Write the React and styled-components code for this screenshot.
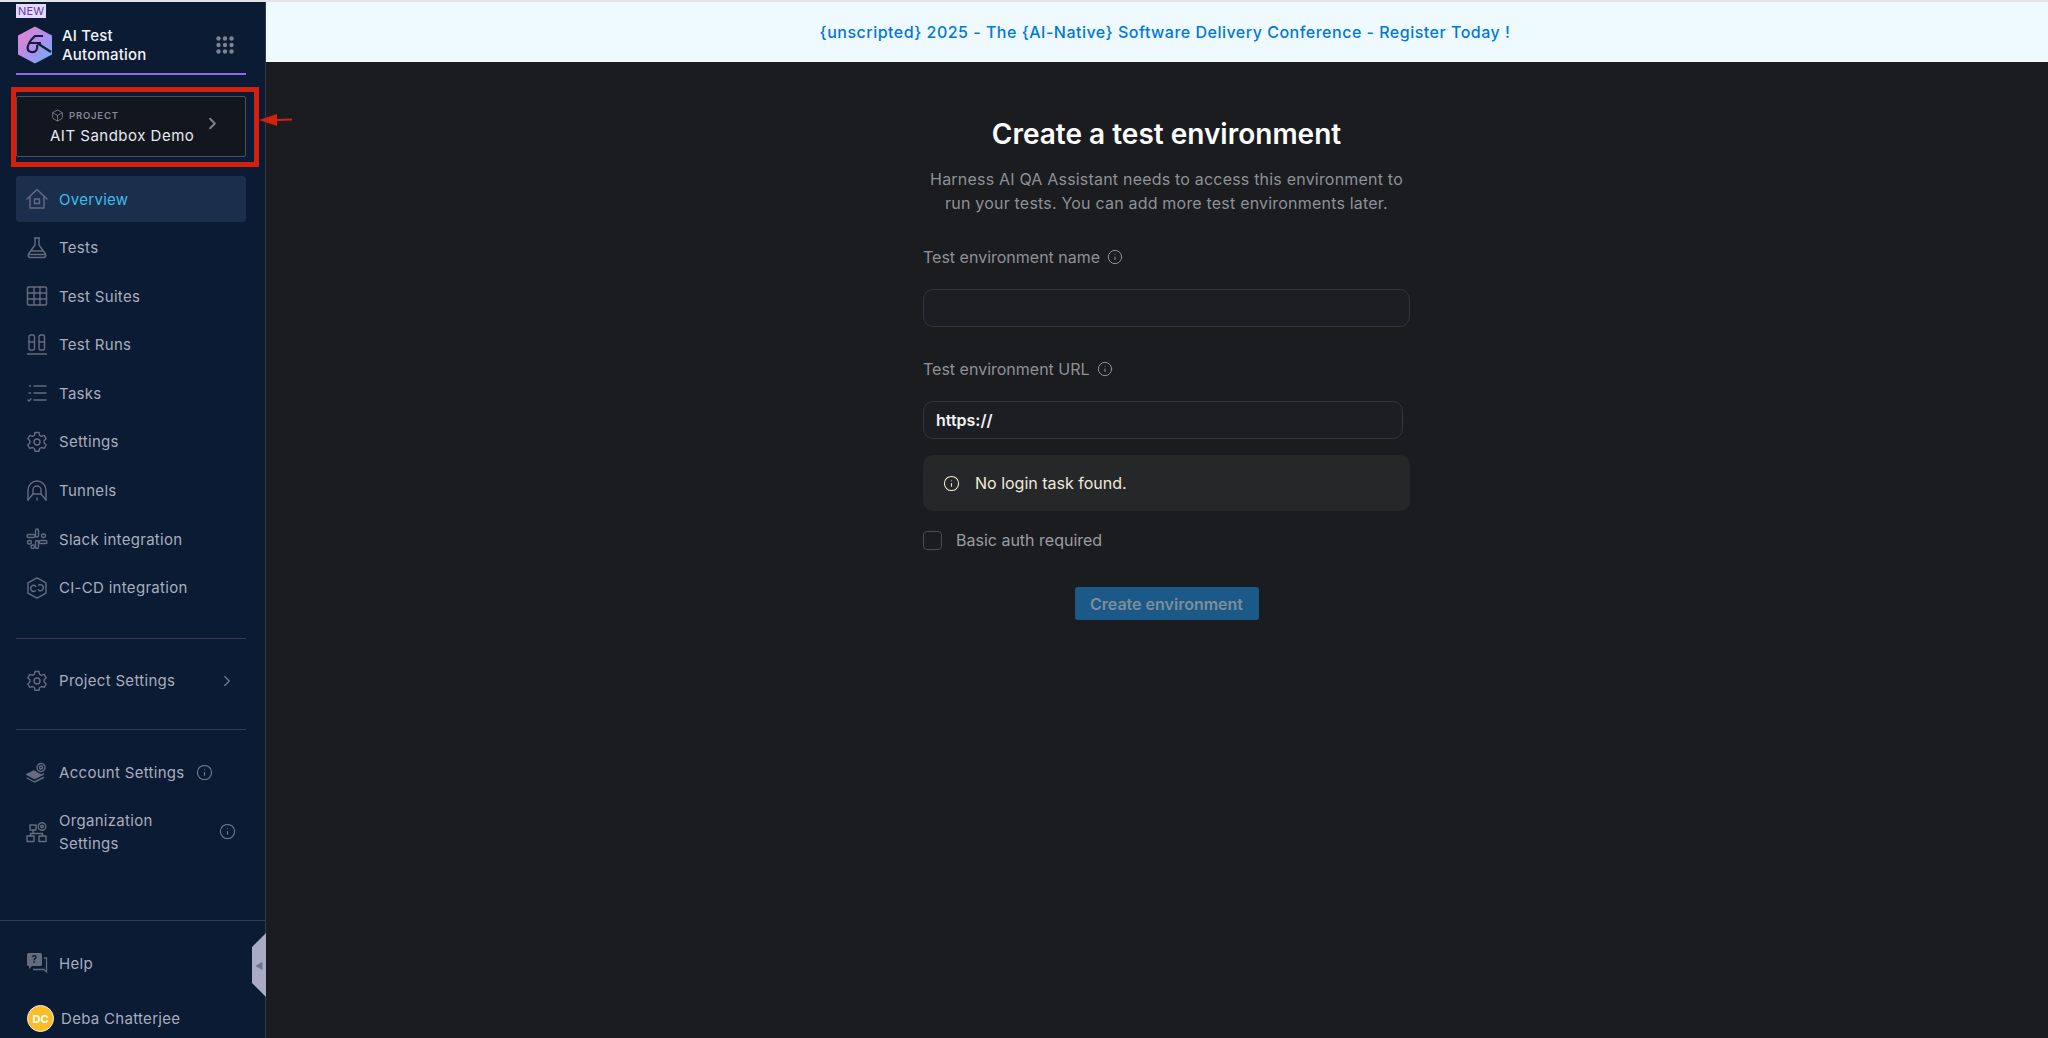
import React from 'react'
import styled, { createGlobalStyle } from 'styled-components'
import { ChevronRight, Info, Box } from 'lucide-react'

const GlobalStyle = createGlobalStyle`
    html, body {
        margin: 0;
        padding: 0;
        background: #1a1c20;
        font-family: Inter, "Noto Sans", sans-serif;
    }
    * {
        box-sizing: border-box;
    }
`

const line = { fill: 'none', stroke: 'currentColor', strokeWidth: 1.4, strokeLinecap: 'round', strokeLinejoin: 'round' }

const Glyph = ({ children, size = 22 }) => (
    <svg width={size} height={size} viewBox="0 0 22 22" {...line}>{children}</svg>
)

const HomeIcon = () => (
    <Glyph>
        <path d="M1 11 11 1.5 21 11" />
        <path d="M4 9v11h14V9" />
        <rect x="8.5" y="11" width="5" height="4.5" />
    </Glyph>
)
const FlaskIcon = () => (
    <Glyph>
        <path d="M8.5 1h5M9 1v7L2.5 17c-1 2 .2 3.5 2 3.5h13c1.8 0 3-1.500 2-3.500L13 8V1" />
        <path d="M5.500 14h11M3 17.500h16" />
    </Glyph>
)
const TableIcon = () => (
    <Glyph>
        <rect x="1.500" y="2" width="19" height="18" rx="1" />
        <path d="M1.500 8h19M1.500 14h19M8 2v18M14 2v18" />
    </Glyph>
)
const RunsIcon = () => (
    <Glyph>
        <rect x="3" y="1" width="5.500" height="15" rx="1.500" />
        <rect x="13" y="1" width="5.500" height="15" rx="1.500" />
        <path d="M3 8h5.500M13 8h5.500M1.500 20h19" />
    </Glyph>
)
const TasksIcon = () => (
    <Glyph>
        <path d="M8 4h12M8 11h12M8 18h12M3.500 4h1M3 11h1.500M2 18l1 1 2-2" />
    </Glyph>
)
const GearIcon = () => (
    <Glyph>
        <circle cx="11" cy="11" r="3" />
        <path d="M9 1.500h4l.6 2.800 1.900 1 2.700-.9 2 3.400-2.100 1.900v2.400l2.100 1.900-2 3.400-2.700-.9-1.900 1-.6 2.800H9l-.6-2.800-1.900-1-2.700.9-2-3.400 2.100-1.900V9.700L1.800 7.800l2-3.400 2.700.9 1.900-1z" />
    </Glyph>
)
const TunnelIcon = () => (
    <Glyph>
        <path d="M2 20V10a9 9 0 0 1 18 0v10" />
        <path d="M2 20l5-6v-4a4 4 0 0 1 8 0v4l5 6" />
        <path d="M7 14h8M11 18v2" />
    </Glyph>
)
const SlackIcon = () => (
    <Glyph>
        <rect x="1" y="6.500" width="8" height="3" rx="1.500" />
        <rect x="9.500" y="1" width="3" height="8" rx="1.500" />
        <rect x="15.500" y="6" width="4" height="3.500" rx="1.700" />
        <rect x="13" y="12.500" width="8" height="3" rx="1.500" />
        <rect x="9.500" y="12.500" width="3" height="8" rx="1.500" />
        <rect x="1.500" y="12.500" width="4" height="3.500" rx="1.700" />
        <rect x="5" y="17" width="3.500" height="3.500" rx="1.700" />
    </Glyph>
)
const CicdIcon = () => (
    <Glyph>
        <path d="M11 .8 20 5.800v10.400l-9 5-9-5V5.800z" />
        <path d="M9.800 9.200a3 3 0 1 0-.4 4.600M12.200 12.800a3 3 0 1 0 .4-4.600" />
    </Glyph>
)
const AccountIcon = () => (
    <Glyph>
        <path d="M1 12.500 8 9l7 4-6.500 3.500z" fill="currentColor" />
        <path d="M1 16l7.500 4 9-4.500M1 12.500l7.500 4 9-4.500" />
        <circle cx="15" cy="5.500" r="1.500" />
        <circle cx="15" cy="5.500" r="4" strokeDasharray="2 1" />
    </Glyph>
)
const OrgIcon = () => (
    <Glyph>
        <rect x="1" y="15" width="7" height="5.500" />
        <rect x="13" y="15" width="7" height="5.500" />
        <rect x="4" y="4" width="6" height="5" />
        <path d="M7 9v3.500M4.500 15v-2.500h12V15" />
        <circle cx="16" cy="5.500" r="1.300" />
        <circle cx="16" cy="5.500" r="3.800" strokeDasharray="2 1" />
    </Glyph>
)
const HelpIcon = () => (
    <svg width="22" height="22" viewBox="0 0 22 22">
        <path d="M2.500 1h12A1.500 1.500 0 0 1 16 2.500v10A1.500 1.500 0 0 1 14.500 14H6l-3 3v-3h-.5A1.500 1.500 0 0 1 1 12.500v-10A1.500 1.500 0 0 1 2.500 1z" fill="currentColor" />
        <path d="M18 6h2.500v14l-2.500-2.500H7" fill="none" stroke="currentColor" strokeWidth="1.300" />
        <text x="8.500" y="11" fontSize="10" fontWeight="700" fontFamily="Inter" textAnchor="middle" fill="#0a1b33">?</text>
    </svg>
)
const LogoMark = () => (
    <svg width="36" height="38" viewBox="0 0 36 38">
        <defs>
            <linearGradient id="logoFill" x1="0" y1="0" x2="1" y2="1">
                <stop offset="0" stopColor="#e986c6" />
                <stop offset="0.5" stopColor="#b48cec" />
                <stop offset="1" stopColor="#5fb6f4" />
            </linearGradient>
        </defs>
        <path d="M18 .5 35 9.500v19L18 37.500 1 28.500v-19z" fill="url(#logoFill)" />
        <path d="M14 14 L18 10 H26 M12 17H24 M14 14c-4 6-5 11 0 12s7-3 6-7M20 17l14 9" fill="none" stroke="#10203a" strokeWidth="2.200" />
    </svg>
)
const MenuDots = () => (
    <svg width="18" height="18" viewBox="0 0 18 18" fill="#7d8294">
        {[2.500, 9, 15.500].flatMap((y) => [2.500, 9, 15.500].map((x) => (
            <circle key={`${x}-${y}`} cx={x} cy={y} r="2.200" />
        )))}
    </svg>
)

const mainItems = [
    { label: 'Overview', icon: <HomeIcon />, active: true },
    { label: 'Tests', icon: <FlaskIcon /> },
    { label: 'Test Suites', icon: <TableIcon /> },
    { label: 'Test Runs', icon: <RunsIcon /> },
    { label: 'Tasks', icon: <TasksIcon /> },
    { label: 'Settings', icon: <GearIcon /> },
    { label: 'Tunnels', icon: <TunnelIcon /> },
    { label: 'Slack integration', icon: <SlackIcon /> },
    { label: 'CI-CD integration', icon: <CicdIcon /> },
]

export default function App() {
    return (
        <Page>
            <GlobalStyle />
            <TopLine />
            <Shell>
                <Sidebar>
                    <NewBadge>NEW</NewBadge>
                    <Header>
                        <LogoMark />
                        <Brand>AI Test<br />Automation</Brand>
                        <MenuDots />
                    </Header>
                    <ProjectBox>
                        <ProjectText>
                            <ProjectLabel><Box size={13} strokeWidth={1.5} />PROJECT</ProjectLabel>
                            <ProjectName>AIT Sandbox Demo</ProjectName>
                        </ProjectText>
                        <ChevronRight size={19} strokeWidth={2.5} color="#7c7f8e" />
                    </ProjectBox>
                    <RedFrame />
                    <RedArrow width="34" height="14" viewBox="0 0 34 14">
                        <path d="M0 7 18 1v5l15-.5v2L18 8v5z" fill="#d4200f" />
                    </RedArrow>
                    <Nav>
                        {mainItems.map((item) => (
                            <NavItem key={item.label} $active={item.active}>
                                <NavIcon>{item.icon}</NavIcon>
                                {item.label}
                            </NavItem>
                        ))}
                    </Nav>
                    <Divider $top={27} />
                    <SettingsRow $top={19}>
                        <NavIcon><GearIcon /></NavIcon>
                        <Grow>Project Settings</Grow>
                        <ChevronRight size={18} strokeWidth={1.5} />
                    </SettingsRow>
                    <Divider $top={25} />
                    <SettingsRow $top={20}>
                        <NavIcon><AccountIcon /></NavIcon>
                        Account Settings
                        <Info size={17} strokeWidth={1.5} />
                    </SettingsRow>
                    <SettingsRow $top={13} $tall>
                        <NavIcon><OrgIcon /></NavIcon>
                        <Grow>Organization<br />Settings</Grow>
                        <Info size={17} strokeWidth={1.5} />
                    </SettingsRow>
                    <FooterBlock>
                        <SettingsRow $top={19}>
                            <NavIcon><HelpIcon /></NavIcon>
                            Help
                        </SettingsRow>
                        <UserRow>
                            <Avatar>DC</Avatar>
                            Deba Chatterjee
                        </UserRow>
                    </FooterBlock>
                    <CollapseHandle>◀</CollapseHandle>
                </Sidebar>
                <Main>
                    <Banner>{'{unscripted} 2025 - The {AI-Native} Software Delivery Conference - Register Today !'}</Banner>
                    <Form>
                        <Title>Create a test environment</Title>
                        <Subtitle>
                            Harness AI QA Assistant needs to access this environment to<br />
                            run your tests. You can add more test environments later.
                        </Subtitle>
                        <FieldLabel $top={32}>Test environment name <Info size={16} strokeWidth={1.5} /></FieldLabel>
                        <Field />
                        <FieldLabel $top={32}>Test environment URL <Info size={16} strokeWidth={1.5} /></FieldLabel>
                        <Field $narrow>https://</Field>
                        <Notice>
                            <Info size={17} strokeWidth={1.5} />
                            No login task found.
                        </Notice>
                        <CheckRow>
                            <CheckBox />
                            Basic auth required
                        </CheckRow>
                        <SubmitButton>Create environment</SubmitButton>
                    </Form>
                </Main>
            </Shell>
        </Page>
    )
}

const Page = styled.div`
    height: 1038px;
    display: flex;
    flex-direction: column;
    overflow: hidden;
`;
const TopLine = styled.div`
    height: 2px;
    background: #e2e4e6;
`;
const Shell = styled.div`
    flex: 1;
    display: flex;
    min-height: 0;
`;
const Sidebar = styled.aside`
    position: relative;
    width: 266px;
    flex-shrink: 0;
    display: flex;
    flex-direction: column;
    padding: 0 19px 0 16px;
    background: #0a1b33;
    border-right: 1px solid #333a4a;
    color: #a9adbf;
`;
const NewBadge = styled.span`
    position: absolute;
    left: 16px;
    top: 2px;
    padding: 0 2px;
    background: #e6d9fb;
    color: #5b3bb0;
    font-size: 11px;
    line-height: 14px;
    letter-spacing: 0.2px;
`;
const Header = styled.div`
    height: 73px;
    flex-shrink: 0;
    display: flex;
    align-items: center;
    gap: 9px;
    padding: 14px 12px 0 1px;
    border-bottom: 2px solid #8f6bea;
`;
const Brand = styled.div`
    flex: 1;
    color: #f2f3f7;
    font-size: 15px;
    font-weight: 500;
    line-height: 19px;
    letter-spacing: 0.2px;
`;
const ProjectBox = styled.div`
    height: 61px;
    margin-top: 21px;
    flex-shrink: 0;
    display: flex;
    align-items: center;
    justify-content: space-between;
    padding: 0 23px 6px 33px;
    background: #12161f;
    border: 1px solid #4b5060;
    border-radius: 2px;
`;
const ProjectText = styled.div`
    display: flex;
    flex-direction: column;
    gap: 5px;
    padding-top: 6px;
`;
const ProjectLabel = styled.div`
    display: flex;
    align-items: center;
    gap: 5px;
    color: #85889a;
    font-size: 9.5px;
    font-weight: 600;
    letter-spacing: 0.8px;
    line-height: 13px;
    padding-left: 1px;
`;
const ProjectName = styled.div`
    color: #e8e9ef;
    font-size: 15px;
    line-height: 18px;
    letter-spacing: 0.5px;
    white-space: nowrap;
`;
const RedFrame = styled.div`
    position: absolute;
    left: 11px;
    top: 85px;
    width: 248px;
    height: 80px;
    border: 5px solid #d4200f;
    pointer-events: none;
`;
const RedArrow = styled.svg`
    position: absolute;
    left: 259px;
    top: 111px;
    z-index: 2;
`;
const Nav = styled.nav`
    margin-top: 19px;
    display: flex;
    flex-direction: column;
    gap: 2.6px;
`;
const NavItem = styled.div`
    height: 46px;
    display: flex;
    align-items: center;
    gap: 11px;
    padding-left: 10px;
    border-radius: 4px;
    font-size: 15px;
    letter-spacing: 0.3px;
    background: ${(p) => (p.$active ? '#1b2f4c' : 'transparent')};
    color: ${(p) => (p.$active ? '#3cbdea' : '#a9adbf')};
`;
const NavIcon = styled.span`
    width: 22px;
    height: 22px;
    flex-shrink: 0;
    display: flex;
    color: #656b80;
    ${NavItem}[data-x] & {
        color: inherit;
    }
`;
const Divider = styled.div`
    height: 1px;
    flex-shrink: 0;
    margin-top: ${(p) => p.$top}px;
    background: #343c4e;
`;
const SettingsRow = styled.div`
    min-height: ${(p) => (p.$tall ? 46 : 46)}px;
    margin-top: ${(p) => p.$top}px;
    display: flex;
    align-items: center;
    gap: 11px;
    padding: 0 10px;
    font-size: 15px;
    line-height: 23px;
    letter-spacing: 0.3px;
    color: #a9adbf;
    > svg {
        color: #7a7f93;
        flex-shrink: 0;
    }
`;
const Grow = styled.div`
    flex: 1;
`;
const FooterBlock = styled.div`
    margin: auto -19px 0 -16px;
    padding: 0 19px 0 16px;
    border-top: 1px solid #343c4e;
`;
const UserRow = styled.div`
    display: flex;
    align-items: center;
    gap: 7px;
    margin: 19px 0 6px 11px;
    font-size: 15px;
    letter-spacing: 0.3px;
    color: #a9adbf;
`;
const Avatar = styled.div`
    width: 27px;
    height: 27px;
    display: flex;
    align-items: center;
    justify-content: center;
    border-radius: 50%;
    background: #fbbc26;
    border: 1px solid #f2f2f2;
    color: #fff;
    font-size: 11px;
    font-weight: 700;
    letter-spacing: 0;
`;
const CollapseHandle = styled.div`
    position: absolute;
    right: -1px;
    top: 931px;
    width: 14px;
    height: 64px;
    display: flex;
    align-items: center;
    justify-content: center;
    background: #a9abc6;
    color: #70738c;
    font-size: 9px;
    clip-path: polygon(100% 0, 100% 100%, 0 78%, 0 22%);
`;
const Main = styled.main`
    flex: 1;
    display: flex;
    flex-direction: column;
    background: #1a1c20;
`;
const Banner = styled.div`
    height: 60px;
    flex-shrink: 0;
    display: flex;
    align-items: center;
    justify-content: center;
    padding: 0 0 1px 16px;
    background: #eefaff;
    color: #0278d5;
    font-size: 16px;
    font-weight: 500;
    letter-spacing: 0.5px;
`;
const Form = styled.div`
    width: 487px;
    margin-left: 657px;
    padding-top: 55px;
    display: flex;
    flex-direction: column;
`;
const Title = styled.h1`
    margin: 0;
    color: #fff;
    font-size: 28px;
    font-weight: 600;
    line-height: 34px;
    text-align: center;
`;
const Subtitle = styled.p`
    margin: 17px 0 0;
    color: #8f9196;
    font-size: 16px;
    line-height: 23.500px;
    text-align: center;
    letter-spacing: 0.2px;
`;
const FieldLabel = styled.label`
    margin-top: ${(p) => p.$top}px;
    display: flex;
    align-items: center;
    gap: 7px;
    color: #8f9196;
    font-size: 16px;
    line-height: 20px;
`;
const Field = styled.div`
    width: ${(p) => (p.$narrow ? '480px' : '100%')};
    height: 38px;
    margin-top: 22px;
    display: flex;
    align-items: center;
    padding: 0 12px;
    background: #1c1e23;
    border: 1px solid #34363f;
    border-radius: 10px;
    color: #f4f4f4;
    font-size: 16px;
    font-weight: 600;
`;
const Notice = styled.div`
    height: 56px;
    margin-top: 16px;
    display: flex;
    align-items: center;
    gap: 15px;
    padding-left: 20px;
    background: #262729;
    border-radius: 10px;
    color: #f1ead8;
    font-size: 16px;
`;
const CheckRow = styled.div`
    margin-top: 19px;
    display: flex;
    align-items: center;
    gap: 14px;
    color: #9a9ca1;
    font-size: 16px;
    line-height: 20px;
`;
const CheckBox = styled.span`
    width: 19px;
    height: 19px;
    border: 1.500px solid #4a4c50;
    border-radius: 4px;
    background: #1a1c20;
`;
const SubmitButton = styled.div`
    align-self: center;
    width: 184px;
    height: 33px;
    margin-top: 37px;
    display: flex;
    align-items: center;
    justify-content: center;
    background: #1b5a88;
    border-radius: 3px;
    color: #7f8d99;
    font-size: 16px;
    font-weight: 600;
`;
